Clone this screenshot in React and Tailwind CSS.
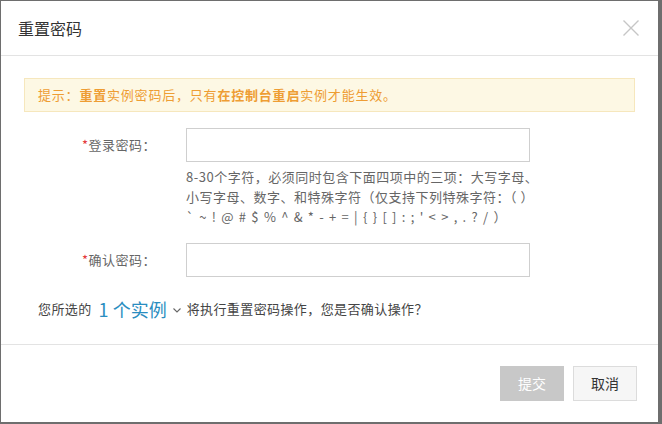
export default function App() {
  const font = { fontFamily: '"Noto Sans CJK SC", "Noto Sans", sans-serif' };
  return (
    <div className="w-[662px] h-[424px] bg-[#6e6e6e] pt-[1px] pl-[1px] pr-[4px] pb-[2px]" style={font}>
      <div className="w-full h-full bg-white flex flex-col">
        <div className="h-[55px] shrink-0 flex items-center justify-between pl-[17px] pr-[19px] border-b border-[#e3e3e3]">
          <span className="text-[16px] text-[#333]">重置密码</span>
          <svg width="16" height="16" viewBox="0 0 16 16" className="mt-[-1px]">
            <path d="M0.5 0.5 L15.5 15.5 M15.5 0.5 L0.5 15.5" stroke="#c6c6c6" strokeWidth="1.4" fill="none" />
          </svg>
        </div>
        <div className="px-[23px] pt-[22px] flex-1">
          <div className="h-[34px] border border-[#f6e7bd] bg-[#fdf8e4] pl-[13px] flex items-center text-[13px] tracking-[0.8px] text-[#ee9d33]">
            <span>提示：<b>重置</b>实例密码后，只有<b>在控制台重启</b>实例才能生效。</span>
          </div>
          <div className="mt-[16px] flex">
            <div className="w-[132px] text-right text-[13px] tracking-[0.5px] text-[#666] leading-[34px]">
              <span className="text-[#e4393c]">*</span>登录密码：
            </div>
            <div className="ml-[30px]">
              <div className="w-[344px] h-[34px] border border-[#cfcfcf]" />
              <div className="mt-[5px] w-[380px] text-[13px] tracking-[0.5px] text-[#666] leading-[20px]">
                8-30个字符，必须同时包含下面四项中的三项：大写字母、<br />
                小写字母、数字、和特殊字符（仅支持下列特殊字符：（&nbsp;）<br />
                <span className="tracking-[1.2px]">` ~ ! @ # $ % ^ &amp; * - + = | {'{'} {'}'} [ ] : ; ' &lt; &gt; , . ? / ）</span>
              </div>
            </div>
          </div>
          <div className="mt-[16px] flex">
            <div className="w-[132px] text-right text-[13px] tracking-[0.5px] text-[#666] leading-[34px]">
              <span className="text-[#e4393c]">*</span>确认密码：
            </div>
            <div className="ml-[30px] w-[344px] h-[34px] border border-[#cfcfcf]" />
          </div>
          <div className="mt-[20px] pl-[14px] flex items-center text-[13px] tracking-[0.4px] text-[#444] h-[24px]">
            <span>您所选的</span>
            <span className="ml-[7px] text-[18px] tracking-normal text-[#2a8dc0]">1 个实例</span>
            <svg width="8" height="5" viewBox="0 0 8 5" className="ml-[6px] mt-[2px]">
              <path d="M0.5 0.5 L4 4 L7.5 0.5" stroke="#666" strokeWidth="1.1" fill="none" />
            </svg>
            <span className="ml-[6px]">将执行重置密码操作，您是否确认操作？</span>
          </div>
        </div>
        <div className="h-[78px] shrink-0 border-t border-[#e3e3e3] flex justify-end items-start pt-[21px] pr-[21px] gap-[9px]">
          <button className="w-[64px] h-[35px] bg-[#c8c8c8] text-white text-[14px]">提交</button>
          <button className="w-[64px] h-[35px] bg-[#f6f6f6] border border-[#dcdcdc] text-[#333] text-[14px]">取消</button>
        </div>
      </div>
    </div>
  );
}
